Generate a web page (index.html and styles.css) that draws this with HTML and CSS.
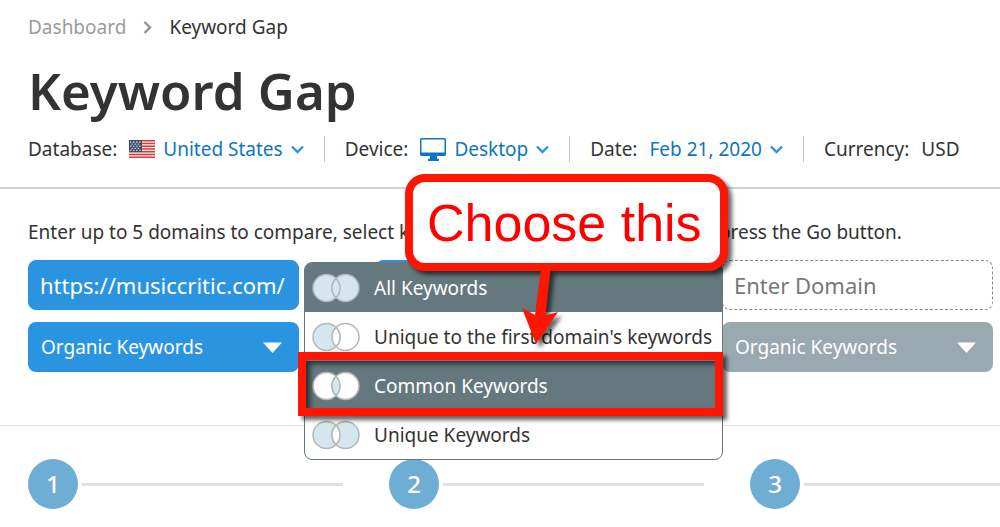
FILE: index.html
```html
<!DOCTYPE html>
<html lang="en">
<head>
<meta charset="utf-8">
<title>Keyword Gap</title>
<meta name="viewport" content="width=device-width, initial-scale=1">
<link rel="stylesheet" href="styles.css">
</head>
<body>
<svg class="defs" aria-hidden="true">
  <symbol id="chevron" viewBox="0 0 13 9"><path d="M1 1.5 6.5 7 12 1.5" fill="none" stroke="currentColor" stroke-width="2.4"/></symbol>
  <symbol id="caret" viewBox="0 0 19 11"><path d="M0 .5h19L9.500 11z" fill="currentColor"/></symbol>
</svg>

<header class="header">
  <nav class="breadcrumb" aria-label="Breadcrumb">
    <a class="breadcrumb-link" href="#">Dashboard</a>
    <svg class="breadcrumb-sep" viewBox="0 0 9 13" aria-hidden="true"><path d="M1.500 1 7 6.500 1.500 12" fill="none" stroke="currentColor" stroke-width="2.4"/></svg>
    <span>Keyword Gap</span>
  </nav>
  <h1 class="title">Keyword Gap</h1>
  <div class="filters">
    <div class="filter">
      <span id="l-db">Database:</span>
      <button class="filter-button" type="button" aria-labelledby="l-db v-db">
        <svg class="flag" viewBox="0 0 26 18" aria-hidden="true">
          <path fill="#fbeeee" d="M0 0h26v18H0z"/>
          <path stroke="#d23c3c" stroke-width="1.400" d="M0 .7h26M0 3.450h26M0 6.200h26M0 8.950h26M0 11.700h26M0 14.450h26M0 17.300h26"/>
          <path fill="#3d4f63" d="M0 0h13v12H0z"/>
          <path stroke="#c3cbd3" stroke-width="1.300" stroke-dasharray="1.500 1.500" d="M1 2h11.500M2.500 4.100h9M1 6.200h11.500M2.500 8.300h9M1 10.400h11.500"/>
        </svg>
        <span id="v-db">United States</span>
        <svg class="chevron" aria-hidden="true"><use href="#chevron"/></svg>
      </button>
    </div>
    <div class="filter">
      <span id="l-dev">Device:</span>
      <button class="filter-button" type="button" aria-labelledby="l-dev v-dev">
        <svg class="monitor" viewBox="0 0 26 23" aria-hidden="true">
          <path fill="#0d75c4" fill-rule="evenodd" d="M1.500 0h23Q26 0 26 1.500v15q0 1.500-1.500 1.500H17v2q0 1 1.500 1h.5v2H8v-2h.5q1.500 0 1.500-1v-2H1.500Q0 18 0 16.500v-15Q0 0 1.500 0zM1.500 1.500v13h23v-13z"/>
        </svg>
        <span id="v-dev">Desktop</span>
        <svg class="chevron" aria-hidden="true"><use href="#chevron"/></svg>
      </button>
    </div>
    <div class="filter">
      <span id="l-date">Date:</span>
      <button class="filter-button" type="button" aria-labelledby="l-date v-date">
        <span id="v-date">Feb 21, 2020</span>
        <svg class="chevron" aria-hidden="true"><use href="#chevron"/></svg>
      </button>
    </div>
    <div class="filter">
      <span>Currency:</span>
      <span>USD</span>
    </div>
  </div>
</header>

<main>
  <form class="compare">
    <p class="intro">Enter up to 5 domains to compare, select keyword type for each domain, and press the Go button.</p>
    <div class="domains">
      <div class="domain">
        <input class="domain-input" type="text" aria-label="First domain" value="https://musiccritic.com/">
        <div class="picker">
          <select class="picker-select" aria-label="First domain keyword type"><option>Organic Keywords</option></select>
          <svg class="caret" aria-hidden="true"><use href="#caret"/></svg>
        </div>
        <div class="menu" role="listbox" aria-label="Keyword intersection">
          <button class="menu-item menu-item-active" type="button" role="option" aria-selected="true">
            <svg class="venn" viewBox="0 0 48 30" aria-hidden="true"><g fill="#d5e6ef" stroke="#b4b7b7" stroke-width="1.500"><circle cx="14.500" cy="15" r="13.500"/><circle cx="33.500" cy="15" r="13.500"/><path d="M24 5.400a13.500 13.500 0 0 1 0 19.200a13.500 13.500 0 0 1 0-19.200z"/></g></svg>
            All Keywords
          </button>
          <button class="menu-item" type="button" role="option" aria-selected="false">
            <svg class="venn" viewBox="0 0 48 30" aria-hidden="true"><g fill="#fff" stroke="#b4b7b7" stroke-width="1.500"><circle cx="33.500" cy="15" r="13.500"/><circle fill="#d5e6ef" cx="14.500" cy="15" r="13.500"/><path d="M24 5.400a13.500 13.500 0 0 1 0 19.200a13.500 13.500 0 0 1 0-19.200z"/></g></svg>
            Unique to the first domain's keywords
          </button>
          <button class="menu-item menu-item-active menu-item-marked" type="button" role="option" aria-selected="false">
            <svg class="venn" viewBox="0 0 48 30" aria-hidden="true"><g fill="#fff" stroke="#b4b7b7" stroke-width="1.500"><circle cx="14.500" cy="15" r="13.500"/><circle cx="33.500" cy="15" r="13.500"/><path fill="#d5e6ef" d="M24 5.400a13.500 13.500 0 0 1 0 19.200a13.500 13.500 0 0 1 0-19.200z"/></g></svg>
            Common Keywords
          </button>
          <button class="menu-item" type="button" role="option" aria-selected="false">
            <svg class="venn" viewBox="0 0 48 30" aria-hidden="true"><g fill="#d5e6ef" stroke="#b4b7b7" stroke-width="1.500"><circle cx="14.500" cy="15" r="13.500"/><circle cx="33.500" cy="15" r="13.500"/><path fill="#fff" d="M24 5.400a13.500 13.500 0 0 1 0 19.200a13.500 13.500 0 0 1 0-19.200z"/></g></svg>
            Unique Keywords
          </button>
          <div class="callout">
            Choose this
            <svg class="arrow" viewBox="0 0 40 80" aria-hidden="true"><path fill="#ff1500" d="M21 0h9.500L25.500 46.500 38 43 16 75 2 39l13 7z"/></svg>
          </div>
        </div>
      </div>
      <div class="domain">
        <input class="domain-input" type="text" aria-label="Second domain">
        <div class="picker">
          <select class="picker-select" aria-label="Second domain keyword type"><option>Organic Keywords</option></select>
          <svg class="caret" aria-hidden="true"><use href="#caret"/></svg>
        </div>
      </div>
      <div class="domain">
        <input class="domain-input domain-input-empty" type="text" aria-label="Third domain" placeholder="Enter Domain">
        <div class="picker picker-muted">
          <select class="picker-select" aria-label="Third domain keyword type"><option>Organic Keywords</option></select>
          <svg class="caret" aria-hidden="true"><use href="#caret"/></svg>
        </div>
      </div>
    </div>
  </form>

  <ol class="steps">
    <li class="step"><span class="step-number">1</span></li>
    <li class="step"><span class="step-number">2</span></li>
    <li class="step"><span class="step-number">3</span></li>
  </ol>
</main>
</body>
</html>
```

FILE: styles.css
```css
* {
  box-sizing: border-box;
}

body {
  margin: 0;
  background: #fff;
  color: #333;
  font-family: "Noto Sans", "Open Sans", sans-serif;
  font-size: 19px;
  line-height: 26px;
  overflow-x: hidden;
}

button,
input,
select {
  font: inherit;
  color: inherit;
}

.defs {
  position: absolute;
  width: 0;
  height: 0;
}

.header {
  padding: 14px 28px 25px;
  border-bottom: 2px solid #d0d2d3;
}

.breadcrumb {
  display: flex;
  align-items: center;
  gap: 17px;
}

.breadcrumb-link {
  color: #989c9c;
  text-decoration: none;
}

.breadcrumb-sep {
  width: 9px;
  height: 13px;
  color: #8e9494;
}

.title {
  margin: 20px 0 16px;
  font-size: 51px;
  font-weight: 600;
  line-height: 60px;
}

.filters {
  display: flex;
  white-space: nowrap;
}

.filter {
  display: flex;
  align-items: center;
  gap: 12px;
}

.filter + .filter {
  margin-left: 20px;
  padding-left: 20px;
  border-left: 1px solid #c4c9cb;
}

.filter-button {
  display: flex;
  align-items: center;
  gap: 8px;
  padding: 0;
  border: 0;
  background: none;
  color: #0d75c4;
}

.flag {
  width: 26px;
  height: 18px;
}

.monitor {
  width: 26px;
  height: 23px;
}

.chevron {
  width: 13px;
  height: 9px;
  color: #2b94e1;
}

.compare {
  padding: 30px 7px 53px 28px;
  border-bottom: 1px solid #dfe5e8;
}

.intro {
  margin: 0 0 15px;
  white-space: nowrap;
}

.domains {
  display: grid;
  grid-template-columns: repeat(3, 1fr);
  gap: 76px;
}

.domain {
  position: relative;
  display: grid;
  gap: 12px;
  min-width: 0;
}

.domain-input {
  width: 100%;
  height: 50px;
  padding: 0 11px;
  border: 1px solid #2b94e1;
  border-radius: 8px;
  background: #2b94e1;
  color: #fff;
  font-size: 22px;
}

.domain-input-empty {
  border: 1px dashed #888;
  background: #fff;
}

.domain-input::placeholder {
  color: #777;
}

.picker {
  display: grid;
  align-items: center;
  border-radius: 8px;
  background: #2b94e1;
  color: #fff;
}

.picker-muted {
  background: #98a9af;
}

.picker-select {
  grid-area: 1 / 1;
  width: 100%;
  height: 50px;
  padding: 0 48px 0 13px;
  border: 0;
  background: none;
  appearance: none;
}

.caret {
  grid-area: 1 / 1;
  justify-self: end;
  width: 19px;
  height: 11px;
  margin-right: 17px;
  pointer-events: none;
}

.menu {
  position: absolute;
  z-index: 1;
  top: 2px;
  left: calc(100% + 5px);
  width: 419px;
  border: 1px solid #64787e;
  border-radius: 8px;
  background: #fff;
}

.menu-item {
  position: relative;
  display: flex;
  align-items: center;
  gap: 14px;
  width: 100%;
  height: 49px;
  padding: 0 7px;
  border: 0;
  background: none;
  text-align: left;
  white-space: nowrap;
}

.menu-item-active {
  background: #64787e;
  color: #fff;
}

.menu-item:first-child {
  border-radius: 6px 6px 0 0;
}

.menu-item-marked::after {
  content: "";
  position: absolute;
  z-index: 1;
  inset: -9px -1px -6px -7px;
  border: 8px solid #ff1500;
  box-shadow: 4px 4px 4px rgba(0, 0, 0, 0.6), inset 4px 4px 5px rgba(0, 0, 0, 0.6);
}

.venn {
  width: 48px;
  height: 30px;
}

.callout {
  position: absolute;
  z-index: 2;
  top: -89px;
  left: 100px;
  padding: 11px 18px 10px 14px;
  border: 8px solid #ff1500;
  border-radius: 20px;
  background: #fff;
  box-shadow: 4px 4px 4px rgba(0, 0, 0, 0.6);
  color: #f00;
  font-family: "Liberation Sans", Arial, sans-serif;
  font-size: 52px;
  line-height: 60px;
  white-space: nowrap;
}

.arrow {
  position: absolute;
  top: calc(100% + 6px);
  left: 107px;
  width: 40px;
  height: 80px;
  overflow: visible;
  filter: drop-shadow(4px 4px 2px rgba(0, 0, 0, 0.6));
}

.steps {
  display: grid;
  grid-template-columns: 361fr 361fr 250fr;
  margin: 0;
  padding: 33px 0 18px 28px;
  list-style: none;
}

.step {
  display: flex;
  align-items: center;
  gap: 4px;
  padding-right: 46px;
}

.step:last-child {
  padding-right: 0;
}

.step::after {
  content: "";
  flex: 1;
  height: 3px;
  background: #dfe3e5;
}

.step-number {
  width: 50px;
  border-radius: 50%;
  background: #6eadd4;
  color: #fff;
  font-size: 24px;
  font-weight: 500;
  line-height: 50px;
  text-align: center;
}
```
